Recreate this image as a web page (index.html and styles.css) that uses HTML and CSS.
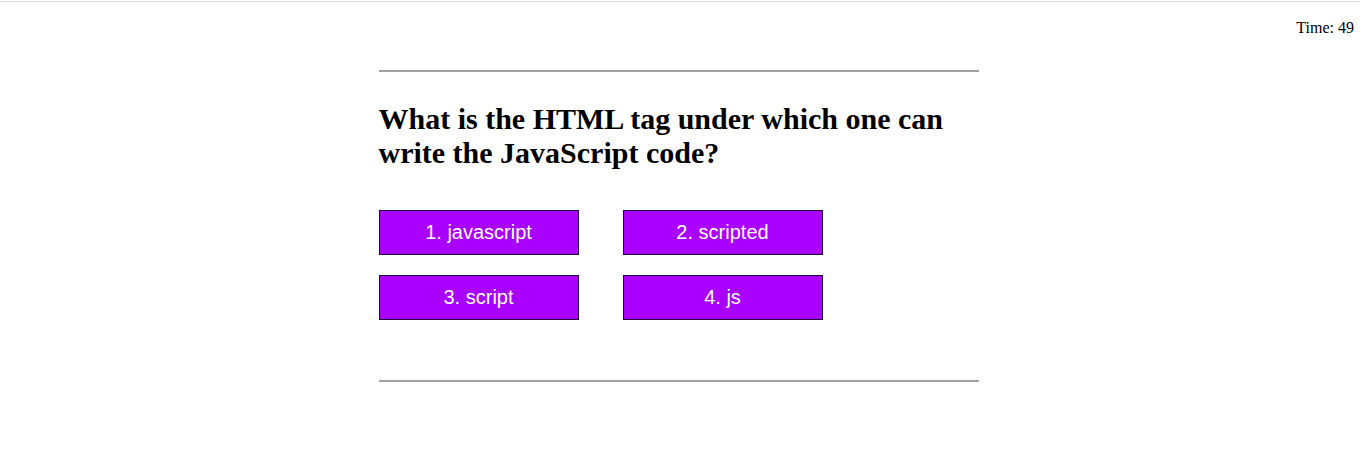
FILE: index.html
```html
<!DOCTYPE html>
<html>
<head>
<meta charset="utf-8">
<link rel="stylesheet" href="styles.css">
</head>
<body>
<div class="topline"></div>
<header class="timer">Time: 49</header>
<div class="wrap">
  <main class="quiz">
    <div class="rule"></div>
    <h1 class="question">What is the HTML tag under which one can write the JavaScript code?</h1>
    <div class="choices">
      <button class="choice">1. javascript</button>
      <button class="choice">2. scripted</button>
      <button class="choice">3. script</button>
      <button class="choice">4. js</button>
    </div>
    <div class="rule rule-bottom"></div>
  </main>
</div>
</body>
</html>
```
FILE: styles.css
```css
html, body {
  margin: 0;
  padding: 0;
  background: #fff;
}
body {
  font-family: "Liberation Serif", "Times New Roman", serif;
  color: #000;
}
.topline {
  margin-top: 1px;
  height: 1px;
  background: #dcdcdc;
}
.timer {
  text-align: right;
  font-size: 16px;
  line-height: 18px;
  padding: 17px 6px 0 0;
}
.wrap {
  display: flex;
  justify-content: center;
  padding-right: 3px;
}
.quiz {
  width: 600px;
  margin-top: 33px;
}
.rule {
  height: 2px;
  background: #a0a0a0;
}
.question {
  font-size: 30px;
  font-weight: bold;
  line-height: 34px;
  margin: 30px 0 40px 0;
}
.choices {
  display: grid;
  grid-template-columns: 200px 200px;
  column-gap: 44px;
  row-gap: 20px;
}
.choice {
  height: 45px;
  background: #aa00ff;
  border: 1px solid #1a0033;
  color: #fff;
  font-family: "Liberation Sans", Arial, sans-serif;
  font-size: 20px;
  padding: 0;
  margin: 0;
}
.rule-bottom {
  margin-top: 60px;
}
```
